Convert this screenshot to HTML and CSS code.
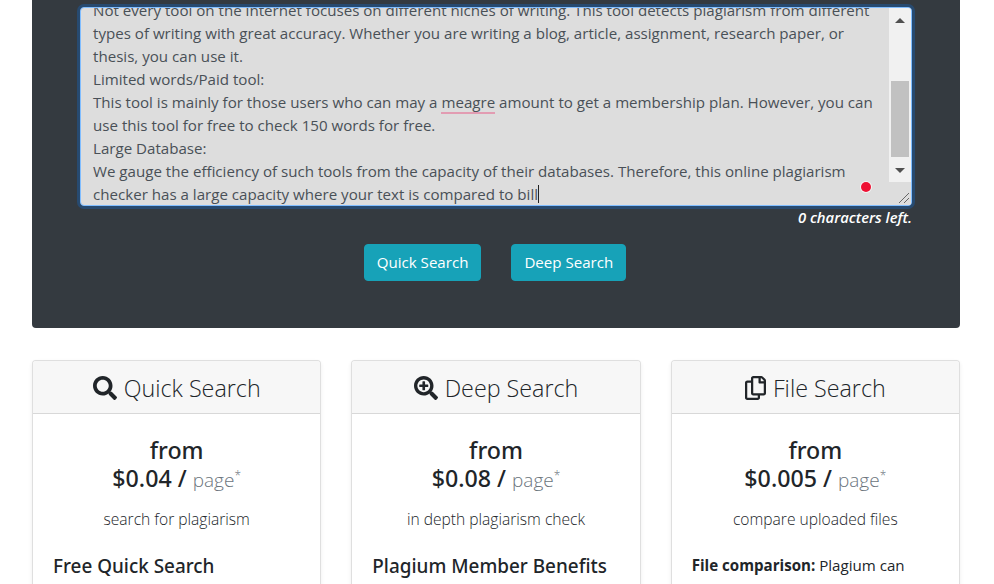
FILE: index.html
```html
<!DOCTYPE html>
<html lang="en">

<head>
    <meta charset="UTF-8">
    <meta name="viewport" content="width=device-width, initial-scale=1.0">
    <title>Plagium</title>
    <link rel="stylesheet" href="styles.css">
</head>

<body>
    <div class="container">
        <div class="search-panel">
            <div class="text-box">
                <div class="text-view">
                    <div class="text-lines">
                        <div>Not every tool on the internet focuses on different niches of writing. This tool detects plagiarism from different</div>
                        <div>types of writing with great accuracy. Whether you are writing a blog, article, assignment, research paper, or</div>
                        <div>thesis, you can use it.</div>
                        <div>Limited words/Paid tool:</div>
                        <div>This tool is mainly for those users who can may a <span class="misspelled">meagre</span> amount to get a membership plan. However, you can</div>
                        <div>use this tool for free to check 150 words for free.</div>
                        <div>Large Database:</div>
                        <div>We gauge the efficiency of such tools from the capacity of their databases. Therefore, this online plagiarism</div>
                        <div>checker has a large capacity where your text is compared to bill<span class="caret"></span></div>
                    </div>
                </div>
                <div class="scrollbar">
                    <div class="arrow arrow-up"></div>
                    <div class="track"><div class="thumb"></div></div>
                    <div class="arrow arrow-down"></div>
                    <div class="resizer">
                        <svg width="17" height="17" viewBox="0 0 17 17">
                            <path d="M5 15L15 5M10 15L15 10" stroke="#666" stroke-width="1" fill="none"/>
                        </svg>
                    </div>
                </div>
                <span class="red-dot"></span>
            </div>
            <div class="chars-left">0 characters left.</div>
            <div class="search-buttons">
                <button class="btn">Quick Search</button>
                <button class="btn">Deep Search</button>
            </div>
        </div>

        <div class="cards">
            <div class="card">
                <div class="card-header">
                    <svg class="icon" viewBox="0 0 512 512"><path d="M505 442.7L405.3 343c-4.5-4.5-10.6-7-17-7H372c27.6-35.3 44-79.7 44-128C416 93.1 322.9 0 208 0S0 93.1 0 208s93.1 208 208 208c48.3 0 92.7-16.4 128-44v16.3c0 6.4 2.5 12.5 7 17l99.7 99.7c9.4 9.4 24.6 9.4 33.9 0l28.3-28.3c9.4-9.4 9.4-24.6.1-34zM208 336c-70.7 0-128-57.2-128-128 0-70.7 57.2-128 128-128 70.7 0 128 57.2 128 128 0 70.7-57.2 128-128 128z"/></svg>
                    Quick Search
                </div>
                <div class="card-body">
                    <div class="price">from<br>$0.04 / <small>page<sup>*</sup></small></div>
                    <p class="tagline">search for plagiarism</p>
                    <h5>Free Quick Search</h5>
                </div>
            </div>
            <div class="card">
                <div class="card-header">
                    <svg class="icon" viewBox="0 0 512 512"><path d="M304 192v32c0 6.6-5.4 12-12 12h-56v56c0 6.6-5.4 12-12 12h-32c-6.6 0-12-5.4-12-12v-56h-56c-6.6 0-12-5.4-12-12v-32c0-6.6 5.4-12 12-12h56v-56c0-6.6 5.4-12 12-12h32c6.6 0 12 5.4 12 12v56h56c6.6 0 12 5.4 12 12zm201 284.7L476.7 505c-9.4 9.4-24.6 9.4-33.9 0L343 405.3c-4.5-4.5-7-10.6-7-17V372c-35.3 27.6-79.7 44-128 44C93.1 416 0 322.9 0 208S93.1 0 208 0s208 93.1 208 208c0 48.3-16.4 92.7-44 128h16.3c6.4 0 12.5 2.5 17 7l99.7 99.7c9.3 9.4 9.3 24.6 0 34zM344 208c0-75.2-60.8-136-136-136S72 132.8 72 208s60.8 136 136 136 136-60.8 136-136z"/></svg>
                    Deep Search
                </div>
                <div class="card-body">
                    <div class="price">from<br>$0.08 / <small>page<sup>*</sup></small></div>
                    <p class="tagline">in depth plagiarism check</p>
                    <h5>Plagium Member Benefits</h5>
                </div>
            </div>
            <div class="card">
                <div class="card-header">
                    <svg class="icon icon-copy" viewBox="0 0 448 512"><path d="M433.941 65.941l-51.882-51.882A48 48 0 0 0 348.118 0H176c-26.51 0-48 21.49-48 48v48H48c-26.51 0-48 21.49-48 48v320c0 26.51 21.49 48 48 48h224c26.51 0 48-21.49 48-48v-48h80c26.51 0 48-21.49 48-48V99.882a48 48 0 0 0-14.059-33.941zM266 464H54a6 6 0 0 1-6-6V150a6 6 0 0 1 6-6h74v224c0 26.51 21.49 48 48 48h96v42a6 6 0 0 1-6 6zm128-96H182a6 6 0 0 1-6-6V54a6 6 0 0 1 6-6h106v88c0 13.255 10.745 24 24 24h88v202a6 6 0 0 1-6 6zm6-256h-64V48h9.632c1.591 0 3.117.632 4.243 1.757l48.368 48.368a6 6 0 0 1 1.757 4.243V112z"/></svg>
                    File Search
                </div>
                <div class="card-body">
                    <div class="price">from<br>$0.005 / <small>page<sup>*</sup></small></div>
                    <p class="tagline">compare uploaded files</p>
                    <p class="file-note"><b>File comparison:</b> Plagium can<br>help</p>
                </div>
            </div>
        </div>
    </div>
</body>

</html>
```

FILE: styles.css
```css
html,
body {
    height: 584px;
    overflow: hidden;
}

body {
    font-family: "Open Sans", Arial, sans-serif;
    font-size: 15.12px;
    background-color: #fff;
    color: #212529;
    margin: 0;
}

.container {
    width: 928px;
    margin: 0 0 0 32px;
}

.search-panel {
    background: #343a40;
    border-radius: 0 0 4px 4px;
    padding: 7px 48px 47px;
    height: 328px;
    box-sizing: border-box;
}

.text-box {
    position: relative;
    display: flex;
    height: 199px;
    background: #ddd;
    border: 1px solid #80bdff;
    border-radius: 4px;
    box-shadow: 0 0 0 3px rgba(0, 123, 255, 0.25);
    box-sizing: border-box;
    overflow: hidden;
}

.text-view {
    flex: 1;
    overflow: hidden;
    padding: 0 12px;
}

.text-lines {
    margin-top: -9px;
    line-height: 23px;
    color: #495057;
    white-space: nowrap;
}

.misspelled {
    border-bottom: 2px solid #e29cb2;
}

.caret {
    display: inline-block;
    width: 1px;
    height: 18px;
    background: #222;
    vertical-align: -3px;
}

.scrollbar {
    width: 22px;
    display: flex;
    flex-direction: column;
    background: #f1f1f1;
}

.arrow {
    height: 24px;
    display: flex;
    justify-content: center;
    align-items: center;
}

.arrow::before {
    content: "";
    border-left: 5px solid transparent;
    border-right: 5px solid transparent;
}

.arrow-up::before {
    border-bottom: 5px solid #505050;
}

.arrow-down::before {
    border-top: 5px solid #505050;
}

.track {
    flex: 1;
    padding-top: 49px;
}

.thumb {
    height: 76px;
    margin: 0 2px;
    background: #c1c1c1;
}

.resizer {
    height: 23px;
    background: #ddd;
    display: flex;
    justify-content: flex-end;
    align-items: flex-end;
}

.red-dot {
    position: absolute;
    left: 780px;
    top: 174px;
    width: 10px;
    height: 10px;
    border-radius: 50%;
    background: #ee1133;
    box-shadow: 0 0 0 1px rgba(255, 255, 255, 0.7);
}

.chars-left {
    margin-top: 1px;
    text-align: right;
    color: #fff;
    font-size: 14.8px;
    font-style: italic;
    font-weight: 600;
    line-height: 20px;
}

.search-buttons {
    display: flex;
    justify-content: center;
    gap: 30px;
    margin-top: 17px;
    padding-right: 2px;
}

.btn {
    font-family: inherit;
    font-size: 15.1px;
    line-height: 23px;
    color: #fff;
    background: #17a2b8;
    border: 1px solid #17a2b8;
    border-radius: 4px;
    padding: 6px 12px;
}

.cards {
    display: flex;
    gap: 30px;
    margin-top: 32px;
}

.card {
    flex: 1;
    background: #fff;
    border: 1px solid rgba(0, 0, 0, 0.125);
    border-radius: 4px;
    box-shadow: 0 2px 4px rgba(0, 0, 0, 0.075);
    height: 400px;
}

.card-header {
    display: flex;
    justify-content: center;
    align-items: center;
    gap: 7px;
    height: 51px;
    padding-top: 1px;
    background: #f7f7f7;
    border-bottom: 1px solid rgba(0, 0, 0, 0.125);
    font-size: 23.3px;
    font-weight: 300;
    border-radius: 3px 3px 0 0;
}

.icon {
    width: 24px;
    height: 24px;
    fill: #212529;
}

.icon-copy {
    width: 21px;
}

.card-body {
    padding: 22px 20px;
}

.price {
    text-align: center;
    font-family: "Noto Sans", Arial, sans-serif;
    font-size: 23.2px;
    line-height: 28px;
    font-weight: 500;
}

.price small {
    font-family: "Open Sans", Arial, sans-serif;
    font-size: 19px;
    font-weight: 300;
    color: #6c757d;
}

.price sup {
    font-size: 12px;
    line-height: 0;
}

.tagline {
    text-align: center;
    font-size: 15.6px;
    font-weight: 300;
    margin: 14px 0 0;
    line-height: 22px;
}

h5 {
    font-family: "Noto Sans", Arial, sans-serif;
    font-size: 18.9px;
    font-weight: 500;
    line-height: 22px;
    margin: 25px 0 0;
}

.file-note {
    line-height: 24px;
    font-weight: 400;
    margin: 23px 0 0;
}
```
